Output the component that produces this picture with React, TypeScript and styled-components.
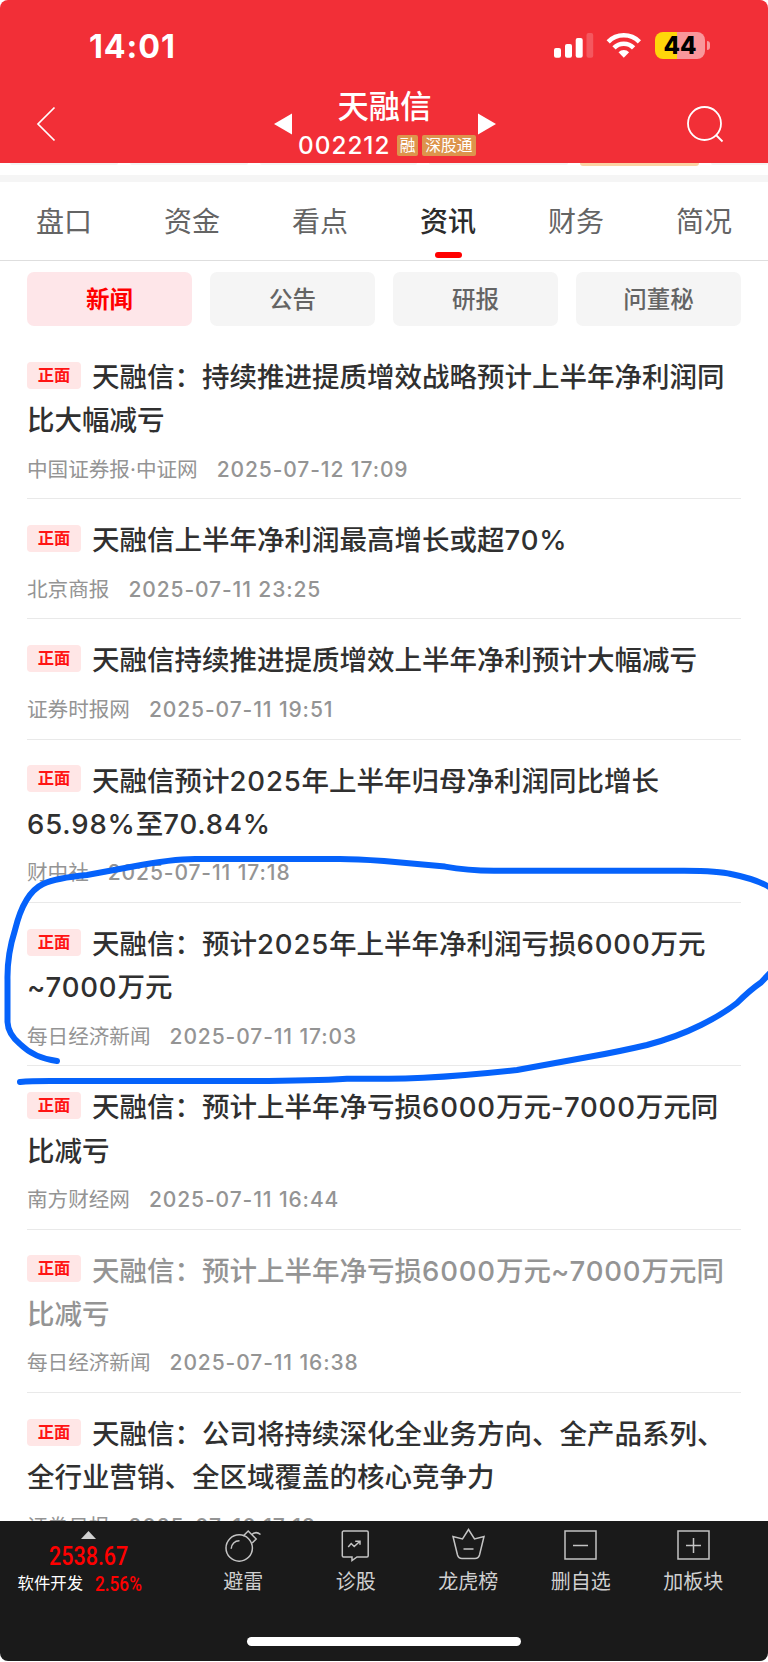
import React from 'react';
import styled, { createGlobalStyle } from 'styled-components';

const Global = createGlobalStyle`
  * { box-sizing: border-box; }
  body { margin: 0; background: #fff; }
`;

const Screen = styled.div`
  position: relative;
  display: flex;
  flex-direction: column;
  width: 768px;
  height: 1662px;
  overflow: hidden;
  background: #fff;
  font-family: Inter, 'Noto Sans CJK SC', sans-serif;
  white-space: nowrap;
`;

const Header = styled.header`
  flex: none;
  height: 163px;
  background: #f22f37;
  color: #fff;
  border-radius: 8px 8px 0 0;
`;

const StatusBar = styled.div`
  display: flex;
  justify-content: space-between;
  height: 86px;
  padding: 0 58px 0 89px;
`;

const Clock = styled.div`
  margin-top: 27px;
  font-size: 32.3px;
  line-height: 40px;
  font-weight: 700;
  letter-spacing: 0.9px;
`;

const StatusIcons = styled.div`
  display: flex;
  padding-top: 32px;
`;

const Battery = styled.div`
  display: flex;
  align-items: center;
  justify-content: center;
  width: 50px;
  height: 27px;
  margin-left: 14px;
  border-radius: 8px;
  background: linear-gradient(to right, #ffd60a 22px, #f9979b 22px);
  color: #000;
  font-size: 24px;
  line-height: 27px;
  font-weight: 800;
`;

const BatteryTip = styled.div`
  width: 3.5px;
  height: 9px;
  margin: 9px 0 0 1.5px;
  border-radius: 0 4px 4px 0;
  background: #f9979b;
`;

const NavBar = styled.div`
  display: flex;
  height: 77px;
  justify-content: space-between;
  padding: 0 44px 0 36px;
`;

const BackIcon = styled.svg`
  margin-top: 20px;
`;

const SearchIcon = styled.svg`
  margin-top: 20px;
`;

const Stock = styled.div`
  display: flex;
  margin-left: 26px;
`;

const StockArrow = styled.svg`
  margin-top: 27px;
`;

const StockInfo = styled.div`
  display: flex;
  flex-direction: column;
  align-items: center;
  width: 184px;
  margin: 0 1px;
`;

const StockName = styled.div`
  margin-top: 1px;
  font-size: 31.3px;
  line-height: 40px;
  font-weight: 500;
`;

const StockCode = styled.div`
  display: flex;
  align-items: center;
  gap: 3.5px;
  margin-top: 4px;
  padding-left: 5px;
  font-size: 24.3px;
  line-height: 28px;
  font-weight: 500;
`;

const CodeText = styled.span`
  margin-right: 3px;
  letter-spacing: 1px;
`;

const StockTag = styled.span<{ $w: number }>`
  width: ${(p) => p.$w}px;
  height: 21px;
  border-radius: 2px;
  background: #dd944c;
  font-size: 15.8px;
  line-height: 21px;
  font-weight: 400;
  text-align: center;
`;

const Peek = styled.div`
  display: flex;
  flex: none;
  gap: 12px;
  height: 12px;
  padding: 0 0 0 10px;
`;

const PeekPill = styled.div<{ $w: number; $hot?: boolean }>`
  flex: none;
  width: ${(p) => p.$w}px;
  height: ${(p) => (p.$hot ? 3 : 2)}px;
  border-radius: 0 0 4px 4px;
  background: ${(p) => (p.$hot ? '#fbd3a4' : '#f4f4f4')};
`;

const Separator = styled.div`
  flex: none;
  height: 7px;
  background: #f5f5f5;
`;

const Tabs = styled.nav`
  display: grid;
  flex: none;
  grid-template-columns: repeat(6, 128px);
  height: 79px;
  border-bottom: 1px solid #dedede;
`;

const Tab = styled.div<{ $active?: boolean }>`
  display: flex;
  flex-direction: column;
  align-items: center;
  padding-top: 20px;
  font-size: 28px;
  line-height: 40px;
  font-weight: ${(p) => (p.$active ? 500 : 400)};
  color: ${(p) => (p.$active ? '#2c2c2c' : '#646464')};
  &::after {
    content: '';
    width: 27px;
    height: 5.5px;
    margin-top: 10px;
    border-radius: 3px;
    background: ${(p) => (p.$active ? '#ff0000' : 'transparent')};
  }
`;

const Filters = styled.div`
  display: grid;
  flex: none;
  grid-template-columns: repeat(4, 165px);
  gap: 18px;
  padding: 11px 27px 0;
  height: 75px;
`;

const Filter = styled.div<{ $active?: boolean }>`
  height: 54px;
  border-radius: 7px;
  background: ${(p) => (p.$active ? '#fee6e9' : '#f5f5f5')};
  color: ${(p) => (p.$active ? '#ff0000' : '#646464')};
  font-size: 23.5px;
  line-height: 55px;
  font-weight: ${(p) => (p.$active ? 700 : 500)};
  text-align: center;
`;

const NewsList = styled.main`
  flex: 1;
  min-height: 0;
  overflow: hidden;
  padding: 0 27px;
`;

const NewsItem = styled.article`
  padding: 20px 0 14.8px;
  border-bottom: 1px solid #e9e9e9;
`;

const NewsTitle = styled.div<{ $read?: boolean }>`
  font-size: 27.5px;
  line-height: 43.3px;
  font-weight: 500;
  color: ${(p) => (p.$read ? '#949494' : '#303030')};
`;

const TitleLine = styled.div`
  display: flex;
  align-items: center;
  height: 43.3px;
`;

const Figure = styled.span`
  letter-spacing: 0.85px;
`;

const Mood = styled.span`
  width: 54px;
  height: 27px;
  margin: -5px 11px 0 0;
  border-radius: 4px;
  background: #ffe6e6;
  color: #ff1414;
  font-size: 16.3px;
  line-height: 27px;
  font-weight: 700;
  text-align: center;
`;

const NewsMeta = styled.div`
  display: flex;
  gap: 19px;
  margin-top: 13px;
  font-size: 20.6px;
  line-height: 28px;
  color: #949494;
`;

const NewsDate = styled.span`
  font-size: 21px;
  font-weight: 500;
  letter-spacing: 0.9px;
`;

const BottomBar = styled.footer`
  display: flex;
  flex: none;
  flex-direction: column;
  align-items: center;
  height: 140px;
  margin-bottom: 1px;
  border-radius: 0 0 8px 8px;
  background: #1a1a1a;
  color: #d0d0d0;
`;

const Actions = styled.div`
  display: grid;
  grid-template-columns: 187px repeat(5, 112.5px);
  width: 768px;
  height: 116px;
`;

const Action = styled.div`
  display: flex;
  flex-direction: column;
  align-items: center;
  padding-top: 5px;
  font-size: 20px;
  line-height: 28px;
`;

const ActionIcon = styled.svg`
  flex: none;
  margin-bottom: 6px;
  fill: none;
  stroke: #c4c4c4;
  stroke-width: 1.5;
`;

const Sector = styled.div`
  display: flex;
  flex-direction: column;
  align-items: center;
  padding: 10px 10px 0 0;
  color: #ff0000;
  font-family: Roboto, 'Noto Sans CJK SC', sans-serif;
`;

const SectorIndex = styled.div`
  margin-top: 4px;
  font-size: 25.3px;
  line-height: 28px;
  font-weight: 500;
  transform: scaleX(0.85);
`;

const SectorRow = styled.div`
  display: flex;
  width: 150px;
  padding-left: 4px;
  line-height: 26px;
`;

const SectorName = styled.span`
  width: 77px;
  color: #fff;
  font-size: 16.4px;
`;

const SectorChange = styled.span`
  font-size: 21px;
  font-weight: 500;
  transform: scaleX(0.82);
  transform-origin: left;
`;

const HomeIndicator = styled.div`
  width: 274px;
  height: 9px;
  border-radius: 5px;
  background: #fff;
`;

const Markup = styled.svg`
  position: absolute;
  inset: 0;
  pointer-events: none;
`;

type News = { lines: string[]; source: string; date: string; read?: boolean };

const news: News[] = [
  { lines: ['天融信：持续推进提质增效战略预计上半年净利润同', '比大幅减亏'], source: '中国证券报·中证网', date: '2025-07-12 17:09' },
  { lines: ['天融信上半年净利润最高增长或超70%'], source: '北京商报', date: '2025-07-11 23:25' },
  { lines: ['天融信持续推进提质增效上半年净利预计大幅减亏'], source: '证券时报网', date: '2025-07-11 19:51' },
  { lines: ['天融信预计2025年上半年归母净利润同比增长', '65.98%至70.84%'], source: '财中社', date: '2025-07-11 17:18' },
  { lines: ['天融信：预计2025年上半年净利润亏损6000万元', '~7000万元'], source: '每日经济新闻', date: '2025-07-11 17:03' },
  { lines: ['天融信：预计上半年净亏损6000万元-7000万元同', '比减亏'], source: '南方财经网', date: '2025-07-11 16:44' },
  { lines: ['天融信：预计上半年净亏损6000万元~7000万元同', '比减亏'], source: '每日经济新闻', date: '2025-07-11 16:38', read: true },
  { lines: ['天融信：公司将持续深化全业务方向、全产品系列、', '全行业营销、全区域覆盖的核心竞争力'], source: '证券日报', date: '2025-07-10 17:18' },
];

const tabs = ['盘口', '资金', '看点', '资讯', '财务', '简况'];
const filters = ['新闻', '公告', '研报', '问董秘'];

// Numbers inside a headline are spaced slightly wider than the Chinese text.
const withFigures = (line: string) =>
  line.split(/([\d.%~-]+)/).map((part, i) => (i % 2 ? <Figure key={i}>{part}</Figure> : part));

const actions = [
  {
    label: '避雷',
    icon: (
      <>
        <circle cx="14.200" cy="22" r="13.200" />
        <path d="M6.200 22.700a8 8 0 0 1 8.300-8M18.200 10l5-5 8 8-4 4M26.200 9q4.500-4.500 9.300-.5" />
      </>
    ),
  },
  {
    label: '诊股',
    icon: (
      <>
        <path d="M6 5h24a1.200 1.200 0 0 1 1.200 1.200v23.600a1.200 1.200 0 0 1-1.200 1.200H20l-5 3.500V31H6.500a1.200 1.200 0 0 1-1.200-1.200V6.200A1.200 1.200 0 0 1 6.500 5z" />
        <path d="M11.200 21l3-3.500 3 3 5.500-5M18.200 15.200h4.800v3.500" />
      </>
    ),
  },
  { label: '龙虎榜', icon: <path d="M18.500 3.500l6 9.500 9.500-2.500-4.500 18.500q-1 3.500-4.500 3.500H12q-3.500 0-4.500-3.500L3 10.500l9.500 2.500zM13.500 23h10" /> },
  { label: '删自选', icon: <path d="M3 5h31v28H3zM11 19.500h15" /> },
  { label: '加板块', icon: <path d="M3 5h31v28H3zM11 19.500h15M18.500 12v15" /> },
];

export default function App() {
  return (
    <>
      <Global />
      <Screen>
        <Header>
          <StatusBar>
            <Clock>14:01</Clock>
            <StatusIcons>
              <svg width="87" height="27" viewBox="0 0 87 27" fill="#fff">
                <rect x="0" y="16" width="7" height="9.700" rx="2" />
                <rect x="11" y="12" width="7" height="13.700" rx="2" />
                <rect x="21.700" y="6" width="7" height="19.700" rx="2" />
                <rect x="32.500" y="1" width="6.700" height="24.700" rx="2" opacity=".2" />
                <g fill="none" stroke="#fff" strokeWidth="4.600">
                  <path d="M54.200 9.800a22 22 0 0 1 31.200 0" />
                  <path d="M60 15.800a13.800 13.800 0 0 1 19.600 0" />
                </g>
                <path d="M64.500 20.300a7.500 7.500 0 0 1 10.600 0l-5.300 5.400z" />
              </svg>
              <Battery>44</Battery>
              <BatteryTip />
            </StatusIcons>
          </StatusBar>
          <NavBar>
            <BackIcon width="20" height="36" viewBox="0 0 20 36" fill="none" stroke="#fff" strokeWidth="1.700">
              <path d="M18.500 1.500L2 18l16.500 16.500" />
            </BackIcon>
            <Stock>
              <StockArrow width="18" height="22" viewBox="0 0 18 22" fill="#fff"><path d="M18 .500v21L0 11z" /></StockArrow>
              <StockInfo>
                <StockName>天融信</StockName>
                <StockCode>
                  <CodeText>002212</CodeText>
                  <StockTag $w={21.5}>融</StockTag>
                  <StockTag $w={54}>深股通</StockTag>
                </StockCode>
              </StockInfo>
              <StockArrow width="18" height="22" viewBox="0 0 18 22" fill="#fff"><path d="M0 .500v21L18 11z" /></StockArrow>
            </Stock>
            <SearchIcon width="37" height="37" viewBox="0 0 37 37" fill="none" stroke="#fff" strokeWidth="1.800">
              <circle cx="17.500" cy="17.500" r="16.500" />
              <path d="M29 29l6.500 6.500" />
            </SearchIcon>
          </NavBar>
        </Header>
        <Peek>
          <PeekPill $w={108} />
          <PeekPill $w={118} />
          <PeekPill $w={157} />
          <PeekPill $w={139} />
          <PeekPill $w={119} $hot />
          <PeekPill $w={57} />
        </Peek>
        <Separator />
        <Tabs>
          {tabs.map((t) => (
            <Tab key={t} $active={t === '资讯'}>{t}</Tab>
          ))}
        </Tabs>
        <Filters>
          {filters.map((f) => (
            <Filter key={f} $active={f === '新闻'}>{f}</Filter>
          ))}
        </Filters>
        <NewsList>
          {news.map((n) => (
            <NewsItem key={n.date}>
              <NewsTitle $read={n.read}>
                {n.lines.map((line, i) => (
                  <TitleLine key={line}>
                    {i === 0 && <Mood>正面</Mood>}
                    <span>{withFigures(line)}</span>
                  </TitleLine>
                ))}
              </NewsTitle>
              <NewsMeta>
                <span>{n.source}</span>
                <NewsDate>{n.date}</NewsDate>
              </NewsMeta>
            </NewsItem>
          ))}
        </NewsList>
        <BottomBar>
          <Actions>
            <Sector>
              <svg width="15" height="8" viewBox="0 0 15 8" fill="#d0d0d0"><path d="M7.500 0L15 8H0z" /></svg>
              <SectorIndex>2538.67</SectorIndex>
              <SectorRow>
                <SectorName>软件开发</SectorName>
                <SectorChange>2.56%</SectorChange>
              </SectorRow>
            </Sector>
            {actions.map((a) => (
              <Action key={a.label}>
                <ActionIcon width="37" height="36" viewBox="0 0 37 36">{a.icon}</ActionIcon>
                {a.label}
              </Action>
            ))}
          </Actions>
          <HomeIndicator />
        </BottomBar>
        <Markup width="768" height="1662" viewBox="0 0 768 1662" fill="none" stroke="#0562fb" strokeWidth="6" strokeLinecap="round" strokeLinejoin="round">
          <path d="M57 1061Q34 1058 20 1044Q8 1034 7.500 1022V980Q7 955 15 930Q24 893 43 884Q56 878 87 875L133 866.500Q172 859 195 859H340Q355 859 384 861L445 866.600Q467 870.700 494 870.700H684Q720 871 731 874Q760 880 772 889" />
          <path d="M772 971L761 982.500Q750 990 737 1003Q723 1014 701 1025Q677 1037 647 1045Q617 1052 591 1056.500L517 1070Q490 1073 465 1075Q417 1079 384 1078.700H347Q310 1081 240 1081H50Q30 1081 20 1082" />
        </Markup>
      </Screen>
    </>
  );
}
